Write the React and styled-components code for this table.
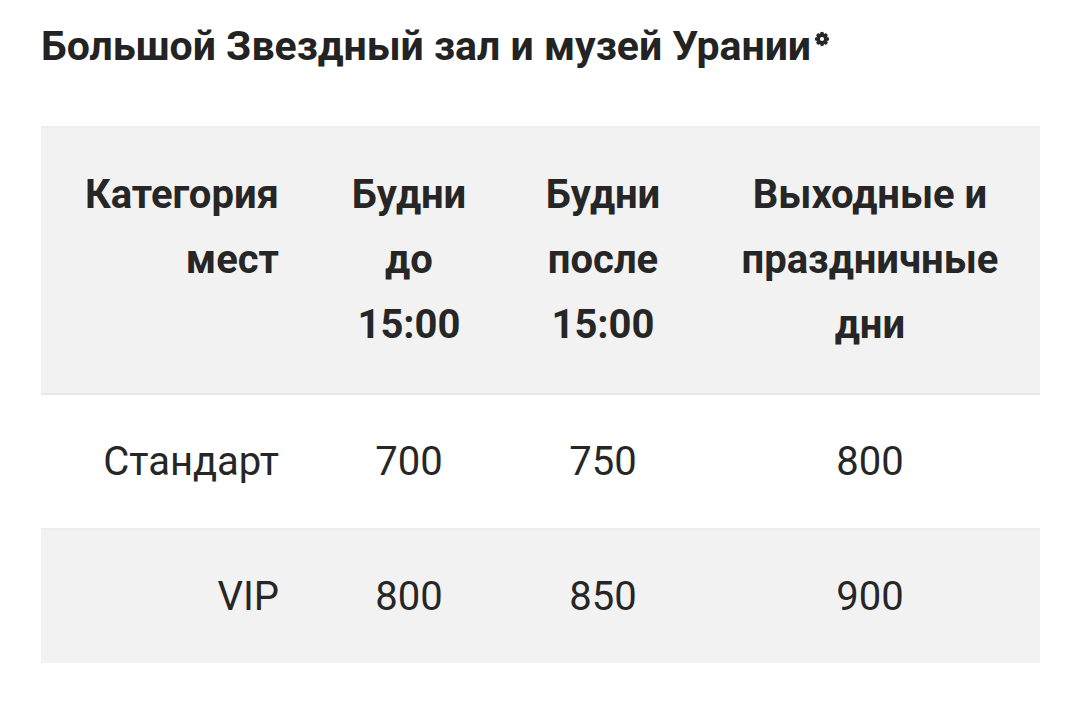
import React from "react";
import styled, { createGlobalStyle } from "styled-components";

const Global = createGlobalStyle`
  html, body { margin: 0; padding: 0; background: #ffffff; }
  body { font-family: Roboto, "Noto Sans", "Liberation Sans", sans-serif; color: #262626; }
`;

const Page = styled.div`
  padding: 22px 40px 40px 41px;
`;

const Title = styled.h2`
  margin: 0 0 56px 0;
  font-size: 41px;
  line-height: 48px;
  font-weight: 700;
  color: #232323;
  display: flex;
  align-items: flex-start;
`;

const Star = styled.svg`
  width: 16px;
  height: 16px;
  margin: 9px 0 0 3px;
`;

const Table = styled.table`
  width: 999px;
  border-collapse: collapse;
  table-layout: fixed;
`;

const Col = styled.col`
  width: ${(p) => p.$w}px;
`;

const HeadRow = styled.tr`
  background: #f2f2f2;
  border-top: 2px solid #eeeeee;
  border-bottom: 2px solid #e8e8e8;
`;

const BodyRow = styled.tr`
  background: ${(p) => (p.$shaded ? "#f2f2f2" : "#ffffff")};
  border-bottom: ${(p) => (p.$last ? "none" : "2px solid #eeeeee")};
`;

const Th = styled.th`
  padding: 34px 33px 36px;
  font-size: 40px;
  line-height: 65px;
  font-weight: 700;
  color: #262626;
  vertical-align: top;
  text-align: ${(p) => (p.$right ? "right" : "center")};
`;

const Td = styled.td`
  padding: 34px 33px;
  height: 65px;
  font-size: 40px;
  line-height: 65px;
  font-weight: 400;
  color: #262626;
  vertical-align: middle;
  text-align: ${(p) => (p.$right ? "right" : "center")};
`;

const rows = [
  ["Стандарт", "700", "750", "800"],
  ["VIP", "800", "850", "900"],
];

function Flower() {
  return (
    <Star viewBox="0 0 20 20">
      <g fill="#262626">
        {[0, 45, 90, 135, 180, 225, 270, 315].map((a) => (
          <circle key={a} cx="10" cy="3.6" r="2.6" transform={`rotate(${a} 10 10)`} />
        ))}
        <circle cx="10" cy="10" r="6" />
      </g>
      <circle cx="10" cy="10" r="2.6" fill="#ffffff" />
    </Star>
  );
}

export default function App() {
  return (
    <>
      <Global />
      <Page>
        <Title>
          Большой Звездный зал и музей Урании
          <Flower />
        </Title>
        <Table>
          <colgroup>
            <Col $w={271} />
            <Col $w={194} />
            <Col $w={194} />
            <Col $w={340} />
          </colgroup>
          <thead>
            <HeadRow>
              <Th $right>Категория мест</Th>
              <Th>Будни до 15:00</Th>
              <Th>Будни после 15:00</Th>
              <Th>Выходные и праздничные дни</Th>
            </HeadRow>
          </thead>
          <tbody>
            {rows.map((r, i) => (
              <BodyRow key={r[0]} $shaded={i % 2 === 1} $last={i === rows.length - 1}>
                {r.map((c, j) => (
                  <Td key={j} $right={j === 0}>
                    {c}
                  </Td>
                ))}
              </BodyRow>
            ))}
          </tbody>
        </Table>
      </Page>
    </>
  );
}
